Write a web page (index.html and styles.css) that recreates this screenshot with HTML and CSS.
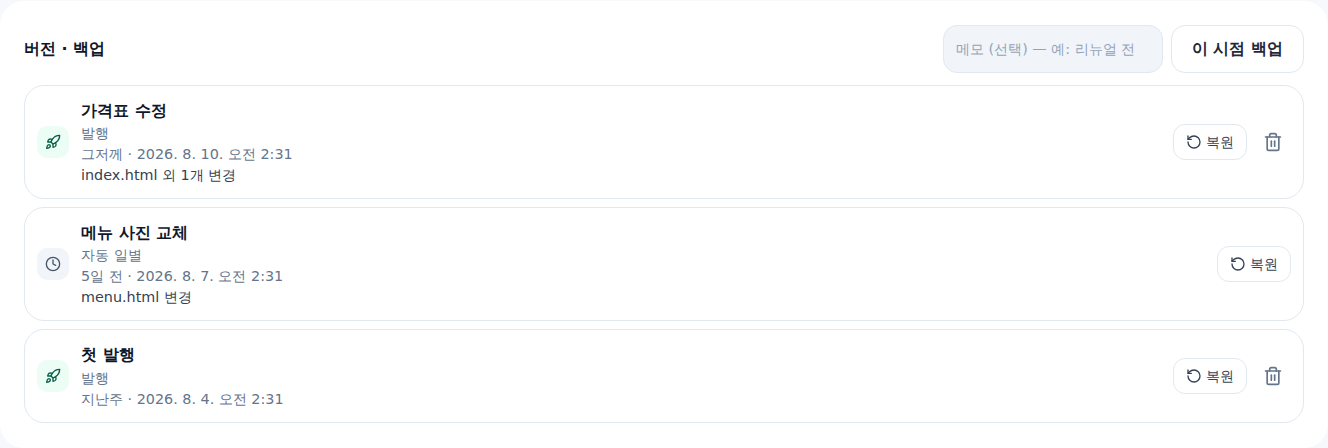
FILE: index.html
```html
<!DOCTYPE html>
<html lang="ko">
<head>
<meta charset="utf-8">
<title>버전 · 백업</title>
<link rel="stylesheet" href="styles.css">
</head>
<body>
<svg class="defs" width="0" height="0" aria-hidden="true">
  <symbol id="rocket" viewBox="0 0 24 24"><path d="M4.5 16.5c-1.5 1.26-2 5-2 5s3.74-.5 5-2c.71-.84.7-2.13-.09-2.91a2.18 2.18 0 0 0-2.91-.09z"/><path d="m12 15-3-3a22 22 0 0 1 2-3.95A12.88 12.88 0 0 1 22 2c0 2.72-.78 7.5-6 11a22.35 22.35 0 0 1-4 2z"/><path d="M9 12H4s.55-3.03 2-4c1.62-1.08 5 0 5 0"/><path d="M12 15v5s3.03-.55 4-2c1.08-1.62 0-5 0-5"/></symbol>
  <symbol id="clock" viewBox="0 0 24 24"><circle cx="12" cy="12" r="10"/><polyline points="12 6 12 12 16 14"/></symbol>
  <symbol id="restore" viewBox="0 0 24 24"><path d="M3 12a9 9 0 1 0 9-9 9.75 9.75 0 0 0-6.74 2.74L3 8"/><path d="M3 3v5h5"/></symbol>
  <symbol id="trash" viewBox="0 0 24 24"><path d="M3 6h18"/><path d="M19 6v14c0 1-1 2-2 2H7c-1 0-2-1-2-2V6"/><path d="M8 6V4c0-1 1-2 2-2h4c1 0 2 1 2 2v2"/><line x1="10" x2="10" y1="11" y2="17"/><line x1="14" x2="14" y1="11" y2="17"/></symbol>
</svg>
<main class="panel">
  <header class="head">
    <h2 class="heading">버전 · 백업</h2>
    <div class="head-actions">
      <input class="memo" type="text" placeholder="메모 (선택) — 예: 리뉴얼 전">
      <button class="backup" type="button">이 시점 백업</button>
    </div>
  </header>
  <ul class="list">
    <li class="row">
      <span class="badge badge-green"><svg class="ic"><use href="#rocket"/></svg></span>
      <div class="info">
        <div class="title">가격표 수정</div>
        <div class="meta">발행</div>
        <div class="meta">그저께 · 2026. 8. 10. 오전 2:31</div>
        <div class="files">index.html 외 1개 변경</div>
      </div>
      <div class="actions">
        <button class="restore" type="button"><svg class="ic"><use href="#restore"/></svg>복원</button>
        <button class="del" type="button" aria-label="삭제"><svg class="ic-lg"><use href="#trash"/></svg></button>
      </div>
    </li>
    <li class="row">
      <span class="badge badge-gray"><svg class="ic"><use href="#clock"/></svg></span>
      <div class="info">
        <div class="title">메뉴 사진 교체</div>
        <div class="meta">자동 일별</div>
        <div class="meta">5일 전 · 2026. 8. 7. 오전 2:31</div>
        <div class="files">menu.html 변경</div>
      </div>
      <div class="actions">
        <button class="restore" type="button"><svg class="ic"><use href="#restore"/></svg>복원</button>
      </div>
    </li>
    <li class="row">
      <span class="badge badge-green"><svg class="ic"><use href="#rocket"/></svg></span>
      <div class="info">
        <div class="title">첫 발행</div>
        <div class="meta">발행</div>
        <div class="meta">지난주 · 2026. 8. 4. 오전 2:31</div>
      </div>
      <div class="actions">
        <button class="restore" type="button"><svg class="ic"><use href="#restore"/></svg>복원</button>
        <button class="del" type="button" aria-label="삭제"><svg class="ic-lg"><use href="#trash"/></svg></button>
      </div>
    </li>
  </ul>
</main>
</body>
</html>
```
FILE: styles.css
```css
* { box-sizing: border-box; }
html, body { margin: 0; padding: 0; }
body {
  width: 1328px;
  height: 448px;
  background: #f6f8fb;
  font-family: "DejaVu Sans", sans-serif;
  color: #0f172a;
  overflow: hidden;
}
.defs { position: absolute; }
.panel {
  height: 447px;
  margin-top: 1px;
  padding: 24px;
  background: #fff;
  border-radius: 24px;
}
.head {
  display: flex;
  align-items: center;
  justify-content: space-between;
  margin-bottom: 12px;
}
.heading { margin: 0; font-size: 16px; font-weight: 700; line-height: 24px; color: #0f172a; }
.head-actions { display: flex; gap: 8px; }
.memo {
  width: 220px;
  height: 48px;
  padding: 0 12px;
  background: #f1f5f9;
  border: 1px solid #e2e8f0;
  border-radius: 14px;
  font: 14.35px "DejaVu Sans", sans-serif;
  color: #0f172a;
}
.memo::placeholder { color: #94a3b8; opacity: 1; }
.backup {
  width: 133px;
  height: 48px;
  background: #fff;
  border: 1px solid #e2e8f0;
  border-radius: 14px;
  font: 700 16px "DejaVu Sans", sans-serif;
  color: #1e293b;
}
.list { list-style: none; margin: 0; padding: 0; display: flex; flex-direction: column; gap: 8px; }
.row {
  display: flex;
  align-items: center;
  gap: 12px;
  padding: 12px;
  border: 1px solid #e2e8f0;
  border-radius: 20px;
  background: #fff;
}
.badge {
  flex: none;
  width: 32px;
  height: 32px;
  border-radius: 10px;
  display: flex;
  align-items: center;
  justify-content: center;
}
.badge-green { background: #ecfdf5; color: #065f46; }
.badge-gray { background: #f1f5f9; color: #475569; }
.ic, .ic-lg { fill: none; stroke: currentColor; stroke-width: 2; stroke-linecap: round; stroke-linejoin: round; }
.ic { width: 16px; height: 16px; flex: none; }
.ic-lg { width: 20px; height: 20px; display: block; }
.info { flex: 1; min-width: 0; }
.title { font-size: 16px; font-weight: 700; line-height: 25.2px; color: #0f172a; }
.meta { font-size: 14.35px; line-height: 21px; color: #64748b; }
.files { font-size: 14.35px; line-height: 21px; color: #334155; }
.actions { display: flex; align-items: center; gap: 8px; flex: none; }
.restore {
  display: flex;
  align-items: center;
  gap: 4px;
  height: 36px;
  padding: 0 12px;
  background: #fff;
  border: 1px solid #e2e8f0;
  border-radius: 12px;
  font: 14.35px "DejaVu Sans", sans-serif;
  color: #334155;
}
.del {
  width: 36px;
  height: 36px;
  padding: 0;
  display: flex;
  align-items: center;
  justify-content: center;
  background: none;
  border: 0;
  color: #64748b;
}
```
